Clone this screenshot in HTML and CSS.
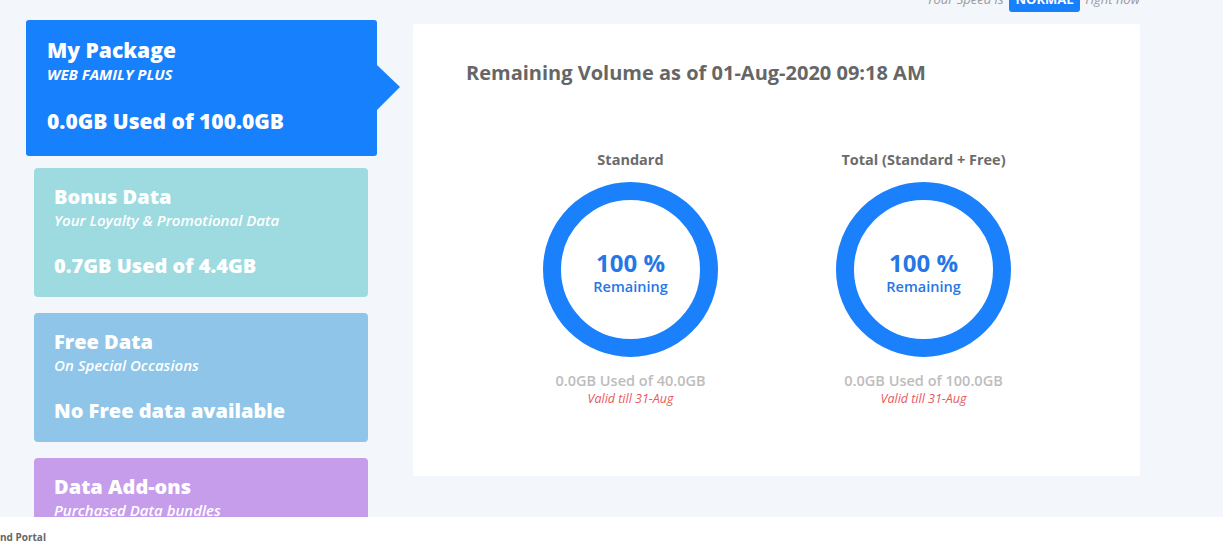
FILE: index.html
```html
<!DOCTYPE html>
<html lang="en">
<head>
  <meta charset="UTF-8">
  <meta name="viewport" content="width=device-width, initial-scale=1.0">
  <title>Usage</title>
  <link rel="stylesheet" href="styles.css">
</head>
<body>
  <div class="page">
    <div class="sidebar">
      <div class="pkg-card active">
        <div class="pkg-title">My Package</div>
        <div class="pkg-sub">WEB FAMILY PLUS</div>
        <div class="pkg-usage">0.0GB Used of 100.0GB</div>
      </div>
      <div class="pkg-card bonus">
        <div class="pkg-title">Bonus Data</div>
        <div class="pkg-sub">Your Loyalty &amp; Promotional Data</div>
        <div class="pkg-usage">0.7GB Used of 4.4GB</div>
      </div>
      <div class="pkg-card free">
        <div class="pkg-title">Free Data</div>
        <div class="pkg-sub">On Special Occasions</div>
        <div class="pkg-usage">No Free data available</div>
      </div>
      <div class="pkg-card addons">
        <div class="pkg-title">Data Add-ons</div>
        <div class="pkg-sub">Purchased Data bundles</div>
        <div class="pkg-usage">No Add-ons available</div>
      </div>
    </div>

    <div class="main">
      <div class="speed">
        <span>Your Speed is</span>
        <span class="speed-badge">NORMAL</span>
        <span>right now</span>
      </div>

      <div class="volume-card">
        <h2 class="volume-title">Remaining Volume as of 01-Aug-2020 09:18 AM</h2>
        <div class="charts">
          <div class="chart">
            <div class="chart-label">Standard</div>
            <div class="donut">
              <div class="donut-inner">
                <div class="donut-pct">100 %</div>
                <div class="donut-text">Remaining</div>
              </div>
            </div>
            <div class="chart-used">0.0GB Used of 40.0GB</div>
            <div class="chart-valid">Valid till 31-Aug</div>
          </div>
          <div class="chart">
            <div class="chart-label">Total (Standard + Free)</div>
            <div class="donut">
              <div class="donut-inner">
                <div class="donut-pct">100 %</div>
                <div class="donut-text">Remaining</div>
              </div>
            </div>
            <div class="chart-used">0.0GB Used of 100.0GB</div>
            <div class="chart-valid">Valid till 31-Aug</div>
          </div>
        </div>
      </div>
    </div>
  </div>

  <div class="footer">nd Portal</div>
</body>
</html>
```

FILE: styles.css
```css
body {
  margin: 0;
  font-family: "Open Sans", "Liberation Sans", sans-serif;
  background-color: #f3f6fb;
}
.page {
  display: flex;
  align-items: flex-start;
  padding-top: 20px;
  height: calc(100vh - 20px);
  overflow: hidden;
}
.sidebar {
  width: 334px;
  margin-left: 34px;
  flex-shrink: 0;
}
.pkg-card {
  position: relative;
  color: #fff;
  border-radius: 4px;
  padding: 18px 20px 19px;
  margin-bottom: 16px;
}
.pkg-card.active {
  background-color: #1780fc;
  margin: 0 -9px 12px -8px;
  padding: 19px 21px 23px;
  border-radius: 3px;
}
.pkg-card.active::after {
  content: "";
  position: absolute;
  left: 100%;
  top: 45px;
  border-left: 23px solid #1780fc;
  border-top: 22px solid transparent;
  border-bottom: 23px solid transparent;
}
.pkg-card.bonus {
  background-color: #9ddbe0;
}
.pkg-card.free {
  background-color: #8ec5e8;
}
.pkg-card.addons {
  background-color: #c69deb;
}
.pkg-title {
  font-size: 20px;
  line-height: 22px;
  font-weight: 800;
}
.pkg-sub {
  font-size: 15px;
  line-height: 24px;
  font-style: italic;
  font-weight: 600;
}
.pkg-usage {
  margin-top: 22px;
  font-size: 20px;
  line-height: 24px;
  font-weight: 800;
}
.pkg-card.active .pkg-title,
.pkg-card.active .pkg-usage {
  font-size: 21px;
}
.pkg-card.active .pkg-sub {
  font-weight: 700;
  line-height: 26px;
}
.main {
  width: 727px;
  margin-left: 45px;
  flex-shrink: 0;
}
.speed {
  display: flex;
  justify-content: flex-end;
  align-items: baseline;
  margin-top: -32px;
  font-size: 13px;
  font-style: italic;
  color: #9a9a9a;
}
.speed-badge {
  background-color: #1780fc;
  color: #fff;
  font-style: normal;
  font-weight: 700;
  line-height: 18px;
  padding: 2px 6px 4px;
  margin: 0 6px;
  border-radius: 3px;
}
.volume-card {
  margin-top: 12px;
  height: 452px;
  box-sizing: border-box;
  background-color: #fff;
  border-radius: 2px;
  padding: 36px 53px 0;
}
.volume-title {
  margin: 0;
  font-size: 20px;
  line-height: 26px;
  font-weight: 700;
  color: #666;
}
.charts {
  display: flex;
  margin-top: 64px;
  padding-left: 18px;
}
.chart {
  width: 293px;
  display: flex;
  flex-direction: column;
  align-items: center;
  text-align: center;
}
.chart-label {
  font-size: 14.5px;
  line-height: 20px;
  font-weight: 700;
  color: #6b6b6b;
}
.donut {
  margin-top: 12px;
  width: 175px;
  height: 175px;
  box-sizing: border-box;
  border: 18px solid #1a80fc;
  border-radius: 50%;
  display: flex;
  align-items: center;
  justify-content: center;
}
.donut-inner {
  padding-top: 7px;
  color: #2677e6;
}
.donut-pct {
  font-size: 24px;
  line-height: 28px;
  font-weight: 700;
}
.donut-text {
  font-size: 14.5px;
  line-height: 20px;
  font-weight: 600;
}
.chart-used {
  margin-top: 14px;
  font-size: 14.5px;
  line-height: 20px;
  font-weight: 600;
  color: #bdbdbd;
}
.chart-valid {
  font-size: 12.5px;
  line-height: 15px;
  font-style: italic;
  color: #e8585c;
}
.footer {
  position: fixed;
  left: 0;
  right: 0;
  bottom: 0;
  height: 28px;
  box-sizing: border-box;
  padding-top: 13px;
  background-color: #fff;
  font-size: 10px;
  line-height: 14px;
  font-weight: 700;
  color: #666;
}
```
